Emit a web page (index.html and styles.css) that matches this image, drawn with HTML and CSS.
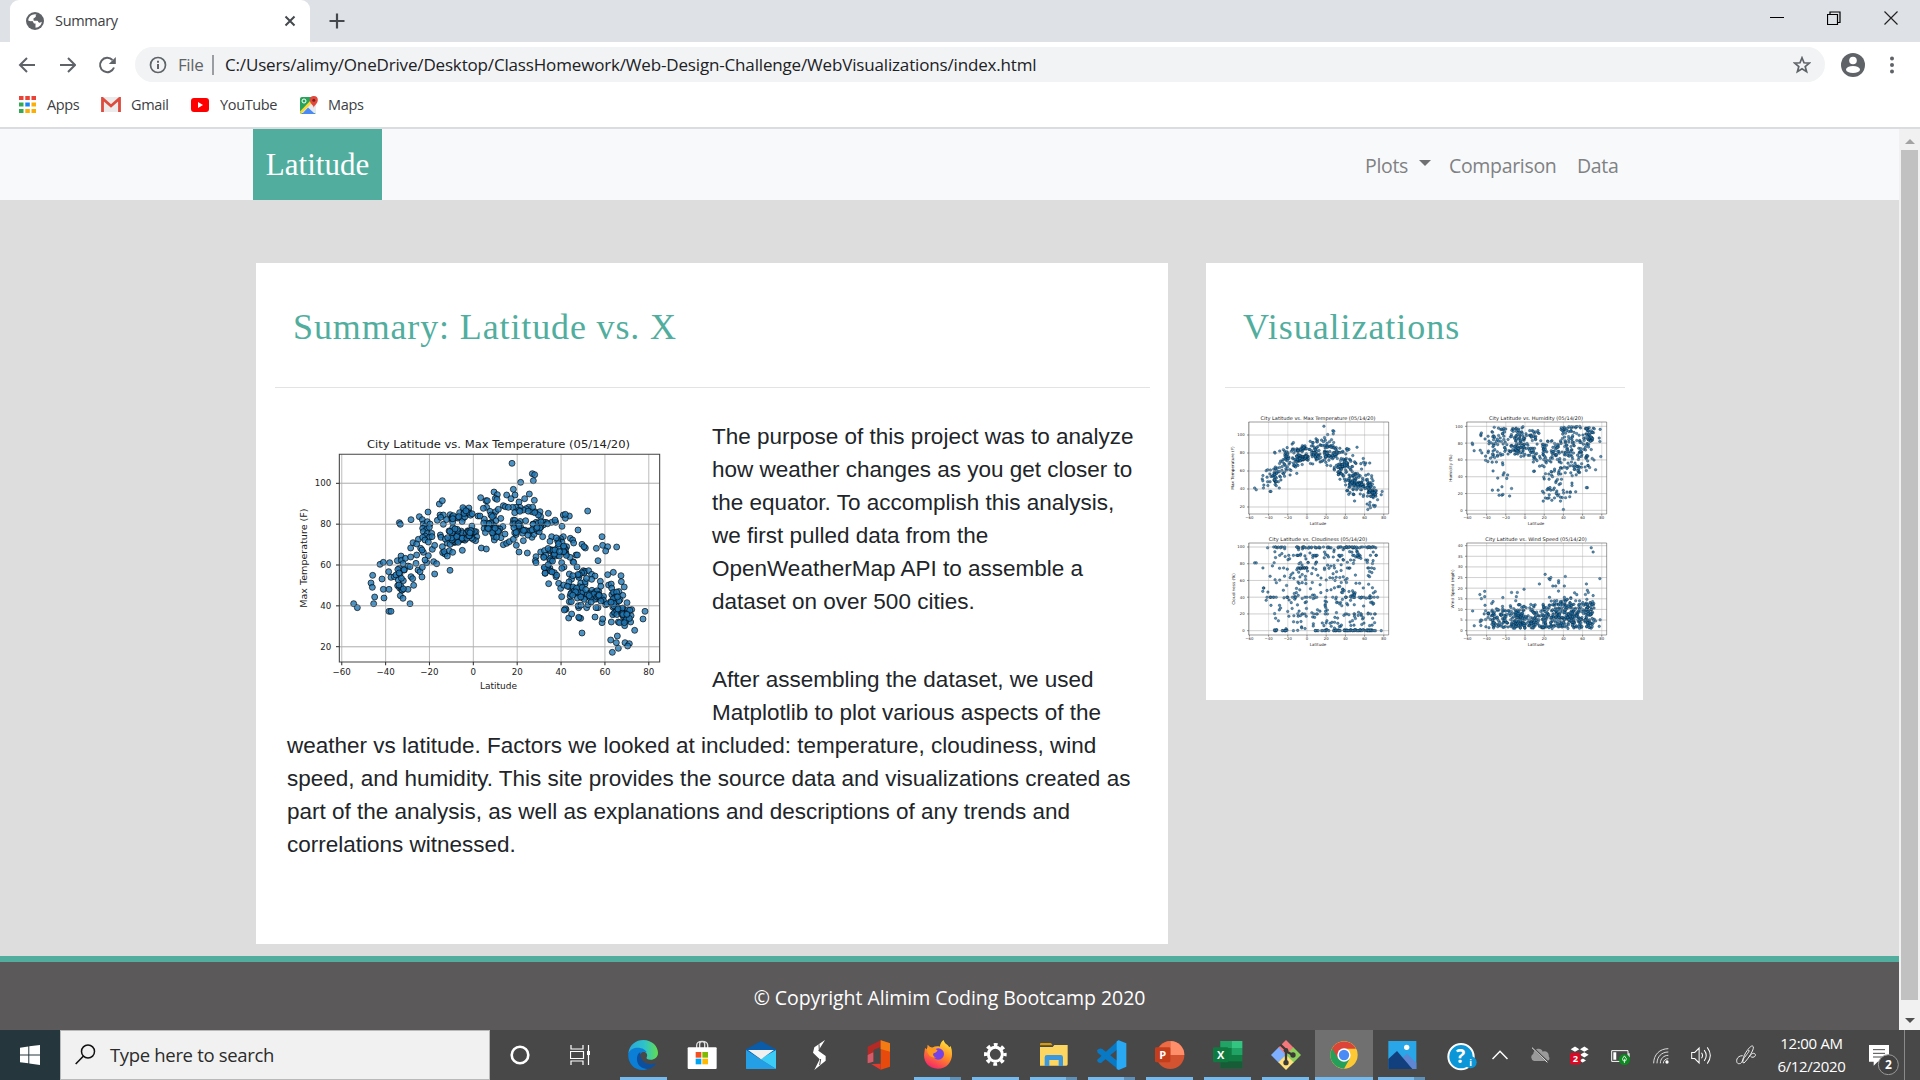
FILE: index.html
```html
<!DOCTYPE html>
<html lang="en">
<head>
<meta charset="utf-8">
<title>Summary</title>
<link rel="stylesheet" href="styles.css">
</head>
<body>
<div class="tabstrip">
  <div class="tab">
    <svg class="favicon" viewBox="0 0 18 18"><circle cx="9" cy="9" r="9" fill="#5f6368"/><path d="M10.500 2.300C6 1.500 2.500 4.500 2.200 8.500c1.500.8 3 .8 4.300.6l1.500 2.400h1.500v4.300c3.500-.2 6.200-3 6.300-6.300-1 .8-2 1-3 .6L11.500 8.500H7.500V6.300h2.300l.7-1.500z" fill="#fff"/><path d="M9.800 2.200v2.600L8 6.300v2.200h3.500l1.500 2.300 2.800-.8C16.500 5 13 2.300 9.800 2.200z" fill="#5f6368"/></svg>
    <span class="tab-title">Summary</span>
    <svg class="tab-close" viewBox="0 0 12 12"><path d="M1.500 1.500l9 9M10.500 1.500l-9 9" stroke="#45494d" stroke-width="2"/></svg>
  </div>
  <svg class="plus" viewBox="0 0 16 16"><path d="M8 .5v15M.5 8h15" stroke="#45494d" stroke-width="2.200"/></svg>
  <div class="win">
    <svg viewBox="0 0 14 14"><path d="M0 6.500h14" stroke="#000"/></svg>
    <svg viewBox="0 0 14 14"><path d="M.5 3.500h10v10H.5zM3 3V1h10v10.500h-2" fill="none" stroke="#000" stroke-width="1.200"/></svg>
    <svg viewBox="0 0 14 14"><path d="M.5.5l13 13M13.500.5l-13 13" stroke="#222" stroke-width="1.200"/></svg>
  </div>
</div>
<div class="toolbar">
  <svg class="nav-ic" viewBox="0 0 18 18"><path d="M17 9H2M9 2L2 9l7 7" fill="none" stroke="#5f6368" stroke-width="2"/></svg>
  <svg class="nav-ic" viewBox="0 0 18 18"><path d="M2 9h15M10 2l7 7-7 7" fill="none" stroke="#5f6368" stroke-width="2"/></svg>
  <svg class="nav-ic" viewBox="0 0 18 18"><path d="M16 11.500A7.200 7.200 0 1 1 14.500 4" fill="none" stroke="#5f6368" stroke-width="2"/><path d="M17.800 1v7h-7z" fill="#5f6368"/></svg>
  <div class="omnibox">
    <svg class="info" viewBox="0 0 18 18"><circle cx="9" cy="9" r="7.500" fill="none" stroke="#5f6368" stroke-width="1.700"/><path d="M9 8v5M9 4.800v2" stroke="#5f6368" stroke-width="2"/></svg>
    <span class="file">File</span><span class="bar"></span>
    <span class="url">C:/Users/alimy/OneDrive/Desktop/ClassHomework/Web-Design-Challenge/WebVisualizations/index.html</span>
    <svg class="star" viewBox="0 0 18 18"><path d="M9 1.800l2 5 5.300.3-4.100 3.400 1.400 5.200L9 12.800l-4.600 2.900 1.400-5.200L1.700 7.100 7 6.800z" fill="none" stroke="#5f6368" stroke-width="1.700"/></svg>
  </div>
  <svg class="avatar" viewBox="0 0 24 24"><circle cx="12" cy="12" r="12" fill="#5f6368"/><circle cx="12" cy="7.500" r="3.800" fill="#fff"/><ellipse cx="12" cy="16.500" rx="7" ry="3.600" fill="#fff"/></svg>
  <svg class="dots" viewBox="0 0 4 18"><g fill="#5f6368"><circle cx="2" cy="2.500" r="2"/><circle cx="2" cy="9" r="2"/><circle cx="2" cy="15.500" r="2"/></g></svg>
</div>
<div class="bookmarks">
  <svg class="b-apps" viewBox="0 0 17 17"><path d="M0 0h4.500v4H0zM6.300 0h4.500v4H6.300zM12.500 0H17v4h-4.500z" fill="#ea4335"/><path d="M0 6.500h4.500v4H0zM0 13h4.500v4H0z" fill="#34a853"/><path d="M6.300 6.500h4.500v4H6.300z" fill="#1a84f5"/><path d="M12.500 6.500H17v4h-4.500zM6.300 13h4.500v4H6.300zM12.500 13H17v4h-4.500z" fill="#fbaf06"/></svg>
  <span class="b1">Apps</span>
  <svg class="b-gmail" viewBox="0 0 20 15"><rect width="20" height="15" rx="1" fill="#eceaea"/><path d="M1.500 15V1.500L10 9l8.500-7.500V15" fill="none" stroke="#dd4b3e" stroke-width="2.800"/></svg>
  <span class="b2">Gmail</span>
  <svg class="b-yt" viewBox="0 0 18 14"><rect width="18" height="14" rx="3" fill="#f00"/><path d="M7 4l5 3-5 3z" fill="#fff"/></svg>
  <span class="b3">YouTube</span>
  <svg class="b-maps" viewBox="0 0 18 18"><rect y="1" width="16" height="17" rx="2" fill="#2aa35a"/><path d="M1 17L14 3l2 4v10z" fill="#e8eaed"/><path d="M2 18l6-6.500 7 6.500z" fill="#4a8af4"/><path d="M0 15.500L11 4l2 2L1 18z" fill="#fdd835"/><circle cx="4" cy="5" r="2" fill="none" stroke="#fff" stroke-width="1"/><path d="M13.800 12c0-3-4-4-4-8a4 4 0 0 1 8 0c0 4-4 5-4 8z" fill="#e2483c"/><circle cx="13.800" cy="4.200" r="1.500" fill="#7b1f18"/></svg>
  <span class="b4">Maps</span>
</div>
<div class="viewport">
  <div class="page">
    <nav class="navbar">
      <a class="brand">Latitude</a>
      <div class="links"><span class="l1">Plots</span><i class="caret"></i><span class="l2">Comparison</span><span class="l3">Data</span></div>
    </nav>
    <main class="content">
      <article class="card main-card">
        <h1 class="h-sum">Summary: Latitude vs. X</h1>
        <hr>
        <div class="prose">
          <svg class="chart" id="big" viewBox="0 0 1170 870"></svg>
          <p>The purpose of this project was to analyze how weather changes as you get closer to the equator. To accomplish this analysis, we first pulled data from the OpenWeatherMap API to assemble a dataset on over 500 cities.</p>
          <p>After assembling the dataset, we used Matplotlib to plot various aspects of the weather vs latitude. Factors we looked at included: temperature, cloudiness, wind speed, and humidity. This site provides the source data and visualizations created as part of the analysis, as well as explanations and descriptions of any trends and correlations witnessed.</p>
        </div>
      </article>
      <aside class="card side-card">
        <h1 class="h-vis">Visualizations</h1>
        <hr>
        <div class="thumbs">
          <svg id="t0" viewBox="0 0 655 363"></svg><svg id="t1" viewBox="0 0 655 363"></svg>
          <svg id="t2" viewBox="0 0 655 363"></svg><svg id="t3" viewBox="0 0 655 363"></svg>
        </div>
      </aside>
    </main>
    <footer>© Copyright Alimim Coding Bootcamp 2020</footer>
  </div>
  <div class="scrollbar"><i class="up"></i><div class="thumb"></div><i class="down"></i></div>
</div>
<div class="taskbar">
  <div class="start"><svg viewBox="0 0 20 20"><path d="M0 2.700L8.300 1.500V9.400H0zM9.300 1.300L20 0v9.400H9.300zM0 10.400h8.300v7.900L0 17.200zM9.300 10.400H20V20L9.300 18.500z" fill="#fff"/></svg></div>
  <div class="search"><svg viewBox="0 0 21 21"><circle cx="13" cy="7.500" r="6.500" fill="none" stroke="#111" stroke-width="1.500"/><path d="M8.500 12L.7 20" stroke="#111" stroke-width="1.600"/></svg><span class="s-text">Type here to search</span></div>
  <div class="cortana"><svg viewBox="0 0 20 20"><circle cx="10" cy="10" r="8.300" fill="none" stroke="#fff" stroke-width="2.600"/></svg></div>
  <div class="tview"><svg viewBox="0 0 21 20"><path d="M1 0v4h12V0M1 20v-4h12v4M.5 6.500h13v7H.5zM18.500 0v20" fill="none" stroke="#fff" stroke-width="1.200"/><path d="M17 6h3v4h-3z" fill="#fff"/></svg></div>
  <div class="app wide run"><svg viewBox="0 0 90 90"><defs><linearGradient id="eg"><stop offset="0" stop-color="#2aa5dd"/><stop offset=".55" stop-color="#2fc3c9"/><stop offset="1" stop-color="#62dd4e"/></linearGradient></defs><path d="M1 40C4 14 24 0 46 0c27 0 44 20 44 38 0 14-11 21-22 21-10 0-14-3-12-7 5-8-2-18-14-18C25 34 10 30 1 40z" fill="url(#eg)"/><path d="M1 40c6-12 16-17 28-17 14 0 25 7 27 14-18-8-27 14-18 27 9 14 25 14 40 8-8 11-20 18-34 18C15 90-2 66 1 40z" fill="#0b7fd6"/><path d="M37 37c-16 6-16 50 22 50 11-1 19-8 25-16-4-3-12 3-22 1-20-3-27-22-25-35z" fill="#0c4f9e"/></svg></div>
  <div class="app wide"><svg viewBox="0 0 90 90"><path d="M29 24V16C29 0 62 0 62 16v8M38 24V12c0-10 15-10 15 0v12" fill="none" stroke="#ddd" stroke-width="4"/><rect x="2" y="22" width="87" height="65" rx="3" fill="#fff"/><path d="M26 36h17v17H26z" fill="#f25022"/><path d="M46 36h17v17H46z" fill="#7fba00"/><path d="M26 56h17v17H26z" fill="#00a4ef"/><path d="M46 56h17v17H46z" fill="#ffb900"/></svg></div>
  <div class="app wide"><svg viewBox="0 0 90 90"><path d="M0 28L45 3l45 25v20H0z" fill="#0a5ba8"/><path d="M0 30l90 57H0z" fill="#1a8fde"/><path d="M90 30v57L42 57z" fill="#3ccbf4"/><path d="M0 30l42 27 48 30H3q-3 0-3-3z" fill="#249ee4"/><path d="M6 30h78L45 58z" fill="#f0f0f0"/></svg></div>
  <div class="app wide"><svg viewBox="0 0 90 90"><path d="M60 0L28 22 24 38 44 58 28 90 62 62V48L40 32z" fill="#fff"/><path d="M42 13l1 20M47 57l-3 18" stroke="#4a4a4a" stroke-width="3"/></svg></div>
  <div class="app wide"><svg viewBox="0 0 90 90"><path d="M11 20L50 1v20L28 30v35l-17 5z" fill="#b52a24"/><path d="M11 45l17-8v28l-17 5z" fill="#d35c6a"/><path d="M50 1l28 9v70l-28 9z" fill="#e64a0c"/><path d="M50 1l28 9v25l-28-8z" fill="#f27c13"/><path d="M22 72l28-1v18z" fill="#e33a2e"/></svg></div>
  <div class="app run multi"><svg viewBox="0 0 90 90"><defs><linearGradient id="fg" x1=".8" y1="0" x2=".3" y2="1"><stop offset="0" stop-color="#ffe63c"/><stop offset=".5" stop-color="#ff8a24"/><stop offset="1" stop-color="#f5246c"/></linearGradient></defs><path d="M4 38l2-14 6 4 2-14c4 5 9 7 13 9 8-4 17-5 23-3 2-9 6-17 12-20 2 12 12 12 17 22l4-4c12 33-2 68-39 68C15 86-1 62 4 38z" fill="url(#fg)"/><circle cx="46" cy="42" r="17" fill="#7542e5"/><path d="M12 24c12-4 24 0 32 8l-7 6c-12 1-6 14 4 14-14 4-30-6-29-28z" fill="#ff9a1f"/></svg></div>
  <div class="app run"><svg viewBox="0 0 90 90"><circle cx="43" cy="43" r="21" fill="none" stroke="#fff" stroke-width="9"/><circle cx="43" cy="43" r="29" fill="none" stroke="#fff" stroke-width="10" stroke-dasharray="11.400 11.400" stroke-dashoffset="5.700"/></svg></div>
  <div class="app run multi"><svg viewBox="0 0 90 90"><path d="M3 12q0-3 3-3h30l5 7H3z" fill="#d99a06"/><path d="M3 21h38l5-6h40v58q0 4-4 4H3z" fill="#fdd662"/><path d="M17 78V52q0-7 7-7h41q7 0 7 7v26H59V60H31v18z" fill="#3b97de"/></svg></div>
  <div class="app run multi"><svg viewBox="0 0 90 90"><path d="M0 31q8-9 16-4l49 39v23L2 38zM65 0v25L12 69q-10 1-12-9z" fill="#0879c4"/><path d="M65 1l23 9v70l-23 10-6-3V4z" fill="#29a9f4"/></svg></div>
  <div class="app run"><svg viewBox="0 0 90 90"><circle cx="46" cy="45" r="42" fill="#d35230"/><path d="M46 3a42 42 0 0 1 42 42H46z" fill="#ff8f6b"/><path d="M46 3v42H6A42 42 0 0 1 46 3z" fill="#ed6c47"/><rect x="0" y="22" width="46" height="45" rx="4" fill="#c43e1c"/><text x="23" y="56" font-size="33">P</text></svg></div>
  <div class="app run"><svg viewBox="0 0 90 90"><path d="M22 3h66v82H22z" fill="#107c41"/><path d="M22 3h34v21H22z" fill="#21a366"/><path d="M56 3h32v21H56z" fill="#33c481"/><path d="M56 24h32v21H56z" fill="#21a366"/><path d="M22 64h66v21H22z" fill="#185c37"/><rect x="0" y="22" width="46" height="45" rx="4" fill="#0f7a40"/><text x="23" y="56" font-size="33">X</text></svg></div>
  <div class="app run"><svg viewBox="0 0 90 90"><path d="M45 0l23 23-23 23-23-23z" fill="#f4777c"/><path d="M67 22l23 23-23 23-23-23z" fill="#8ccf5b"/><path d="M23 22l22 23-22 23L0 45z" fill="#7fb0ff"/><path d="M45 44l23 23-23 23-23-23z" fill="#ffe07a"/><path d="M28 14l17 16v42M45 34l22 12" fill="none" stroke="#3b3a38" stroke-width="7"/><circle cx="45" cy="31" r="7" fill="#3b3a38"/><circle cx="45" cy="68" r="8" fill="#3b3a38"/><circle cx="66" cy="45" r="8" fill="#3b3a38"/></svg></div>
  <div class="app run active"><svg viewBox="0 0 90 90"><circle cx="45" cy="45" r="41" fill="#fcc934"/><path d="M45 45L9.500 24.500A41 41 0 0 0 45 86l18-31z" fill="#25a05a"/><path d="M9.500 24.500A41 41 0 0 1 80.500 26H45L27 55z" fill="#dc4437"/><circle cx="45" cy="45" r="20" fill="#fff"/><circle cx="45" cy="45" r="15.500" fill="#4b8bf5"/></svg></div>
  <div class="app run multi"><svg viewBox="0 0 90 90"><path d="M4 3h84v84H4z" fill="#28a6e8"/><path d="M40 60l20-19 28 27v19H40z" fill="#5f86d2"/><path d="M4 57l26-24 46 54H4z" fill="#12407f"/><circle cx="59" cy="22" r="8" fill="#fff"/></svg></div>
  <div class="tray">
    <svg class="y-help" viewBox="0 0 90 84"><circle cx="42" cy="41" r="38" fill="#0b96d8" stroke="#fff" stroke-width="6"/><text x="41" y="61" font-size="58">?</text><circle cx="71" cy="58" r="18" fill="#0b96d8"/><text x="71" y="68" font-size="27">i</text></svg>
    <svg class="y-chev" viewBox="0 0 16 10"><path d="M.5 9L8 1.300 15.500 9" fill="none" stroke="#fff" stroke-width="1.500"/></svg>
    <svg class="y-cloud" viewBox="0 0 60 48"><path d="M12 42a12 12 0 0 1-2-22C12 4 34 0 38 14c10-4 20 3 18 14 6 8 0 14-5 14z" fill="#9a9a9a"/><path d="M8 2l46 44" stroke="#4a4a4a" stroke-width="6"/><path d="M6 2l46 44" stroke="#eee" stroke-width="3"/></svg>
    <svg class="y-drop" viewBox="0 0 60 56"><path d="M2 9L15 1l13 8-13 8zM30 9l13-8 13 8-13 8zM30 26l13-8 13 8-13 8zM28 43l11-6 9 6-10 6z" fill="#fff"/><rect x="0" y="20" width="32" height="35" rx="5" fill="#d80a24"/><text x="16" y="47" font-size="28">2</text></svg>
    <svg class="y-bat" viewBox="0 0 58 46"><path d="M2 2h50v33H2z" fill="none" stroke="#fff" stroke-width="3"/><path d="M7 7h9v23H7zM53 10h4v12h-4z" fill="#fff"/><circle cx="41" cy="29" r="17" fill="#0c8a1f"/><path d="M41 18q-10 10-4 15h8q6-5-4-15zM41 27v13" fill="none" stroke="#fff" stroke-width="2.500"/></svg>
    <svg class="y-wifi" viewBox="0 0 48 48"><g fill="none" stroke="#ddd" stroke-width="3"><path d="M2 46C2 20 20 2 46 2M12 46c0-20 14-34 34-34M22 46c0-14 10-24 24-24M31 46c0-8 6-14 15-14"/></g><circle cx="42" cy="42" r="5" fill="#fff"/></svg>
    <svg class="y-vol" viewBox="0 0 62 56"><g fill="none" stroke="#fff" stroke-width="3"><path d="M2 19h9L24 6v44L11 37H2zM31 20q6 8 0 16M39 12q12 16 0 32M48 4q18 24 0 48"/></g></svg>
    <svg class="y-pen" viewBox="0 0 60 60"><path d="M20 32C-2 32-2 58 10 56c12 0 8-20 24-40C44 2 50 0 52 6c2 8-14 34-28 48l-4-2 2-10C34 26 46 12 36 18M40 36c8-16 20-12 18-4-2 6-12 6-14 2" fill="none" stroke="#eee" stroke-width="3"/></svg>
    <div class="clock"><span class="c1">12:00 AM</span><span class="c2">6/12/2020</span></div>
    <svg class="y-note" viewBox="0 0 90 90"><path d="M0 0h60v50H26L14 62V50H0z" fill="#fff"/><path d="M12 14h36M12 25h36M12 36h36" stroke="#4a4a4a" stroke-width="3"/><circle cx="58" cy="59" r="30" fill="#414141" stroke="#9a9a9a" stroke-width="3"/><text x="58" y="72" font-size="36">2</text></svg>
    <i class="peek"></i>
  </div>
</div>
<script src="charts.js"></script>
</body>
</html>
```
FILE: charts.js
```js
// Seeded generator keeps the scatter stable between loads.
let seed = 20;
const rnd = () => (seed = (seed * 16807) % 2147483647) / 2147483647;
const gauss = () => (rnd() + rnd() + rnd() + rnd() - 2) * 1.7;

// City latitude / max temperature, in plot canvas units of the large figure.
const measured = `191,551 202,563 243,489 248,466 247,502 254,531 251,551 270,433 280,427 299,428 276,477 280,508 297,508 282,534 296,455
303,472 313,470 297,574 303,574 322,422 333,408 334,421 346,415 362,411 380,405 328,445 343,450 354,438 360,440 318,465 330,462 323,497
329,504 335,510 354,508 340,482 331,527 339,535 360,551 371,496 363,470 368,476 325,480 378,430 384,450 390,455 396,471 397,442 410,428
415,407 405,420 431,425 440,431 434,462 400,397 427,388 434,376 362,384 369,368 385,358 380,372 392,385 396,390 328,308 331,313 363,299
388,290 397,299 414,276 448,252 457,242 450,285 460,285 442,301 452,292 460,313 400,312 406,318 412,305 420,312 398,325 410,328 418,322
400,335 412,340 425,340 405,348 418,352 426,350 398,352 405,360 415,366 451,345 453,352 457,380 458,398 465,402 463,395 472,408 478,392
488,397 480,451 517,391 666,130 727,161 734,164 730,182 692,187 670,208 612,216 622,224 616,235 621,238 650,225 675,225 663,236 718,222
704,236 687,246 733,241 572,233 588,242 592,242 640,257 646,260 574,384 589,387 687,396 712,399 738,410 736,422 738,428 752,396 776,491
765,442 893,273 864,330 816,319 820,285 838,288 826,295 826,283 936,350 938,376 953,380 947,393 980,381 919,385 924,422 876,373 886,384
882,380 841,355 848,360 851,369 970,457 993,467 994,485 1065,574 1059,597 1034,631 982,648 962,660 979,668 985,685 967,697 1005,668
1018,671 1013,678 876,639 836,594 845,582 868,594 872,595 866,592 915,591 936,608 938,597 964,606 985,606 1004,617 1022,606 953,464
931,484 1011,548 924,563 918,563 890,563 866,563 828,568 826,566 823,570 838,545 844,545 815,530 820,350 812,356 797,307 785,307
775,280 768,307 760,306 750,275 752,290 735,275 745,285 725,275 716,262 708,266 700,270 690,262 678,262 668,262 655,262 590,262
580,265 600,274 617,275 625,268 611,287 603,285 564,288 570,288 640,374 650,370 658,365 679,376 670,358 700,362 726,352 732,343
758,350 785,350 780,364 633,353 645,342 613,360 558,335 560,350 557,362 880,452 885,454 861,441 849,425 851,427 840,412 858,405
862,405 830,380 825,395 828,400 805,360 815,428 822,441 838,462 865,468 896,452 905,463 915,468 905,478 885,492 798,470 806,490 812,505`
  .trim().split(/\s+/).map(p => p.split(',').map(Number));

// Dense regions: centre x, centre y, spread x, spread y, count.
const clusters = [[503,358,17,12,32],[500,290,16,9,16],[536,276,10,8,11],[540,340,10,13,18],[492,328,9,7,8],[603,322,17,14,34],
[688,318,13,14,26],[715,272,18,6,6],[742,315,18,8,16],[790,400,16,22,28],[782,450,14,8,14],[815,395,10,12,6],
[850,500,24,18,14],[888,520,26,9,34],[870,468,16,10,6],[915,525,12,7,10],[968,510,16,11,10],[980,535,12,9,9],[985,573,13,8,20],
[1010,590,11,11,18],[952,550,14,9,7],[882,545,16,8,7],[335,448,12,12,4],[333,500,8,10,5]];
for (const [cx, cy, sx, sy, n] of clusters)
  for (let i = 0; i < n; i++) measured.push([cx + gauss() * sx, cy + gauss() * sy]);

const temp = measured.map(([x, y]) => [(x - 550) / 6.579, 100 - (y - 190) / 6.125]);
const lats = temp.map(p => p[0]);

const humidity = lats.filter((l, i) => i % 6 !== 1).map(l => {
  const r = rnd();
  let h;
  if (l < -38) h = 55 + rnd() * 42;
  else if (l < -12) h = r < .25 ? 38 + rnd() * 30 : 64 + rnd() * 36;
  else if (l < 8) h = 64 + rnd() * 36;
  else if (l < 18) h = r < .2 ? 40 + rnd() * 25 : 62 + rnd() * 33;
  else if (l < 36) h = r < .45 ? 12 + rnd() * 40 : 56 + rnd() * 28;
  else if (l < 53) h = r < .18 ? 15 + rnd() * 30 : 48 + rnd() * 52;
  else if (l < 64) h = r < .6 ? 42 + rnd() * 28 : 65 + rnd() * 35;
  else h = r < .25 ? 45 + rnd() * 35 : 82 + rnd() * 18;
  return [l, h];
}).concat([[-34,24],[-28,24],[-27,18],[-24,18],[-23,19],[-16,17],[-14,26],[-24,28],[-19,38],[40,1],[65,27],[64,27],[78,82],[79,64],[-55,80],[-53,71],[19,11],[28,12],[37,11]]);

const levels = [0, 0, 0, 1, 1, 20, 40, 75, 90, 99, 100, 100];
const clouds = lats.filter((l, i) => i % 6 !== 2).map(l => {
  const r = rnd();
  if (l < -43) return [l, [75, 90, 81, 47, 51][Math.floor(rnd() * 5)]];
  if (l < -35) return [l, r < .5 ? 40 : 30 + rnd() * 70];
  if (r < .5) return [l, rnd() * 100];
  const v = levels[Math.floor(rnd() * levels.length)];
  if (v < 2 && l > -13 && l < 8) return [l, rnd() < .5 ? 75 : rnd() * 100];
  return [l, v];
});

const wind = lats.map(l => {
  const peak = l > 20 && l < 72 ? 8 : 6;
  return [l, Math.min(19, 1 + Math.abs(peak - 1.5 + gauss() * (l > 15 ? 4.3 : 3.6)))];
}).concat([[69,39],[71,37],[21,26.5],[27,25],[25,24.500],[42,25.500],[35,23.500],[35,22.500],[26,24],[15,22],[29,21],[32,21],[41,21],[64,22],[78,24.500],[-1,19.500],[-42,18.500],[-47,17],[-42,16],[-14,18],[-8,18],[-9,16],[65,19],[66,18],[63,17],[71,16.500]]);

function figure(id, o) {
  const X = v => o.x0 + v * o.sx, Y = v => o.y0 - v * o.sy;
  let s = '<g stroke="#b0b0b0" stroke-opacity=".8" stroke-width="' + o.grid + '">';
  const xt = [-60, -40, -20, 0, 20, 40, 60, 80];
  for (const v of xt) s += `<path d="M${X(v)} ${o.top}V${o.bottom}"/>`;
  for (const v of o.yt) s += `<path d="M${o.left} ${Y(v)}H${o.right}"/>`;
  s += '</g>';
  const dot = p => `<circle cx="${X(p[0]).toFixed(1)}" cy="${Y(p[1]).toFixed(1)}" r="${o.r}"/>`;
  s += `<g fill="#1f77b4" stroke="#000" stroke-width="${o.edge}" fill-opacity=".8" stroke-opacity=".75">` + o.data.map(dot).join('') + '</g>';
  s += '<g stroke="#b0b0b0" stroke-opacity=".5" stroke-width="' + o.grid + '">';
  for (const v of o.yt) s += `<path d="M${o.left} ${Y(v)}H${o.right}"/>`;
  s += '</g>';
  s += `<path d="M${o.left} ${o.top}H${o.right}V${o.bottom}H${o.left}z" fill="none" stroke="#444" stroke-width="${o.grid}"/>`;
  s += `<g fill="#222" font-family="DejaVu Sans, sans-serif" font-size="${o.fs}">`;
  for (const v of xt) s += `<path d="M${X(v)} ${o.bottom}v${o.tick}" stroke="#333" stroke-width="${o.grid}"/><text text-anchor="middle" x="${X(v)}" y="${o.bottom + o.xl}">${String(v).replace('-', '−')}</text>`;
  for (const v of o.yt) s += `<path d="M${o.left} ${Y(v)}h${-o.tick}" stroke="#333" stroke-width="${o.grid}"/><text text-anchor="end" x="${o.left - o.tick * 2.400}" y="${Y(v) + o.fs * .36}">${v}</text>`;
  const mid = (o.left + o.right) / 2, my = (o.top + o.bottom) / 2;
  s += `<text text-anchor="middle" x="${mid - o.lx}" y="${o.bottom + o.ll}" font-size="${o.fs * 1.04}">Latitude</text>`;
  s += `<text text-anchor="middle" transform="translate(${o.yx} ${my}) rotate(-90)" font-size="${o.fs * 1.05}" textLength="${o.yw}" lengthAdjust="spacingAndGlyphs">${o.ylabel}</text>`;
  s += `<text text-anchor="middle" x="${mid - o.lx}" y="${o.top - o.ty}" font-size="${o.fs * 1.3}" textLength="${o.tw}" lengthAdjust="spacingAndGlyphs">${o.title}</text></g>`;
  document.getElementById(id).innerHTML = s;
}
const t5 = [20, 40, 60, 80, 100], t6 = [0, 20, 40, 60, 80, 100];
figure('big', {data: temp, x0: 550, sx: 6.579, y0: 802.5, sy: 6.125, left: 148, right: 1109, top: 103, bottom: 726, yt: t5, r: 9, edge: 2.6, grid: 3.2, fs: 26, tick: 10, xl: 40, ll: 81, lx: 3, yx: 50, yw: 298, ylabel: 'Max Temperature (F)', ty: 18, tw: 789, title: 'City Latitude vs. Max Temperature (05/14/20)'});
const small = {x0: 270, sx: 2.879, left: 95, right: 515, top: 27, bottom: 303, r: 3.9, edge: 1.1, grid: 1.6, fs: 11.500, tick: 5, xl: 16, ll: 34, lx: 2, ty: 7};
figure('t0', {...small, data: temp, y0: 336, sy: 2.7, yt: t5, yx: 52, yw: 130, ylabel: 'Max Temperature (F)', tw: 345, title: 'City Latitude vs. Max Temperature (05/14/20)'});
figure('t1', {...small, data: humidity, y0: 292, sy: 2.520, yt: t6, yx: 50, yw: 82, ylabel: 'Humidity (%)', tw: 282, title: 'City Latitude vs. Humidity (05/14/20)'});
figure('t2', {...small, data: clouds, y0: 290, sy: 2.510, yt: t6, yx: 53, yw: 95, ylabel: 'Cloudiness (%)', tw: 295, title: 'City Latitude vs. Cloudiness (05/14/20)'});
figure('t3', {...small, data: wind, y0: 290, sy: 6.375, yt: [0, 5, 10, 15, 20, 25, 30, 35, 40], yx: 57, yw: 117, ylabel: 'Wind Speed (mph)', tw: 304, title: 'City Latitude vs. Wind Speed (05/14/20)'});
```
FILE: styles.css
```css
* { box-sizing: border-box; }
body { margin: 0; width: 1920px; height: 1080px; overflow: hidden; display: flex; flex-direction: column; background: #fff; font-family: "Open Sans", "Noto Sans", sans-serif; color: #3c4043; }
svg { display: block; flex: none; }
span { white-space: nowrap; }

.tabstrip { height: 42px; background: #dee1e6; display: flex; align-items: center; }
.tab { margin-left: 10px; width: 300px; height: 42px; background: #fff; border-radius: 9px 9px 0 0; display: flex; align-items: center; padding: 0 14px 0 16px; }
.favicon { width: 18px; height: 18px; }
.tab-title { margin-left: 11px; font-size: 14.500px; letter-spacing: -.3px; flex: 1; padding-bottom: 1px; }
.tab-close { width: 12px; height: 12px; }
.plus { width: 16px; height: 16px; margin-left: 19px; }
.win { margin-left: auto; display: flex; gap: 43px; padding: 0 22px 6px 0; }
.win svg { width: 14px; height: 14px; }

.toolbar { height: 45px; display: flex; align-items: center; padding-left: 18px; }
.nav-ic { width: 18px; height: 18px; margin-right: 22px; }
.omnibox { margin-left: -3px; width: 1690px; height: 35px; border-radius: 18px; background: #f1f3f4; display: flex; align-items: center; padding: 0 14px; }
.info { width: 18px; height: 18px; }
.file { margin-left: 11px; width: 34px; font-size: 17px; letter-spacing: -.4px; color: #5f6368; }
.bar { width: 2px; height: 20px; background: #9a9ea2; }
.url { margin-left: 11px; font-size: 17px; letter-spacing: -.163px; color: #202124; flex: 1; }
.star { width: 18px; height: 18px; }
.avatar { width: 24px; height: 24px; margin-left: 16px; }
.dots { width: 4px; height: 18px; margin-left: 25px; }

.bookmarks { height: 42px; border-bottom: 2px solid #dadce0; display: flex; align-items: center; padding: 0 0 5px 19px; font-size: 14.500px; letter-spacing: -.35px; }
.b-apps { width: 17px; height: 17px; margin-right: 11px; }
.b-gmail { width: 20px; height: 15px; margin-right: 10px; }
.b-yt { width: 18px; height: 14px; margin-right: 11px; }
.b-maps { width: 18px; height: 18px; margin-right: 10px; }
.b1 { width: 54px; }
.b2 { width: 60px; }
.b3 { width: 80px; }

.viewport { height: 901px; display: flex; }
.page { width: 1899px; background: #ddd; display: flex; flex-direction: column; }
.navbar { height: 71px; background: #f8f9fb; display: flex; padding-left: 253px; }
.brand { width: 129px; height: 71px; background: #51ae9e; color: #fff; font: 31px "Liberation Serif", serif; display: flex; align-items: center; justify-content: center; }
.links { margin-left: auto; width: 534px; display: flex; align-items: center; padding-top: 2px; font-size: 19.500px; letter-spacing: -.33px; color: #808183; }
.l1 { width: 55px; }
.caret { border: 6px solid transparent; border-top-color: #6f7072; border-bottom: 0; margin: -6px 18px 0 -1px; }
.l2 { width: 128px; }

.content { height: 756px; padding: 63px 0 0 256px; display: flex; align-items: flex-start; gap: 38px; }
.card { background: #fff; }
.main-card { width: 912px; height: 681px; padding: 0 18px 0 19px; }
.side-card { width: 437px; height: 437px; padding: 0 18px 0 19px; }
.card h1 { margin: 0; height: 124px; padding: 40px 0 0 18px; font: 36px/48px "Liberation Serif", serif; color: #51ae9e; }
.h-sum { letter-spacing: .87px; }
.card .h-vis { letter-spacing: .95px; }
.card hr { margin: 0; border: 0; height: 1px; background: #e3e3e3; }
.prose { padding: 32px 13px 0 12px; font: 22.500px/33px "Liberation Sans", Arial, sans-serif; color: #212529; }
.prose p { margin: 0 0 45px; }
.chart { float: left; width: 390px; height: 290px; margin: 0 32px 0 3px; }
.thumbs { display: grid; grid-template-columns: 218.330px 218.330px; margin: 25px 0 0 -8.300px; width: 437px; }
.thumbs svg { width: 218.330px; height: 121px; }
footer { height: 74px; border-top: 6px solid #51ae9e; background: #5c595a; color: #fff; font-size: 19.500px; letter-spacing: -.06px; display: flex; align-items: center; justify-content: center; padding-top: 2px; }

.scrollbar { width: 21px; background: #f1f1f1; display: flex; flex-direction: column; align-items: center; padding: 10px 0 7px; }
.up { border: 5px solid transparent; border-bottom-color: #a3a3a3; border-top: 0; }
.thumb { width: 17px; height: 850px; margin-top: 6px; background: #c1c1c1; }
.down { border: 5px solid transparent; border-top-color: #505050; border-bottom: 0; margin-top: auto; }

.taskbar { height: 50px; background: #484848; display: flex; color: #fff; }
.taskbar text { fill: #fff; font-family: "Open Sans", sans-serif; font-weight: 700; text-anchor: middle; }
.start { width: 60px; background: #26363d; padding: 15px 20px; }
.start svg { width: 20px; height: 20px; }
.search { width: 429.500px; background: #f1f1f1; border: 1px solid #b9b9b9; color: #2b2b2b; display: flex; align-items: center; padding: 0 0 2px 14px; font-size: 18.500px; letter-spacing: -.33px; }
.search svg { width: 21px; height: 21px; margin-right: 14px; }
.cortana { width: 61px; padding: 15px 20px; }
.cortana svg { width: 20px; height: 20px; }
.tview { width: 63px; padding: 15px 19px; }
.tview svg { width: 21px; height: 20px; }
.app { width: 58px; height: 50px; display: flex; flex-direction: column; align-items: center; padding-top: 10px; flex: none; }
.wide { width: 59px; }
.app svg { width: 30px; height: 30px; }
.run::after { content: ""; width: 47px; height: 3px; margin-top: 7px; background: #76b9ed; }
.multi::after { background: linear-gradient(90deg, #76b9ed 36px, #5f90b8 36px); }
.active { background: #707070; }
.active::after { width: 58px; }
.tray { flex: 1; position: relative; display: flex; align-items: center; padding-left: 16px; }
.y-help { width: 30px; height: 28px; margin: 4px 15px 0 0; }
.y-chev { width: 16px; height: 10px; margin-right: 22px; }
.y-cloud { width: 20px; height: 16px; margin-right: 20px; }
.y-drop { width: 20px; height: 19px; margin-right: 21px; }
.y-bat { width: 19px; height: 15px; margin: 4px 23px 0 0; }
.y-wifi { width: 16px; height: 16px; margin: 2px 22px 0 0; }
.y-vol { width: 21px; height: 19px; margin-right: 24px; }
.y-pen { width: 20px; height: 20px; margin-right: 21px; }
.clock { width: 70px; display: flex; flex-direction: column; align-items: center; font-size: 15px; line-height: 23px; letter-spacing: -.33px; margin-right: 22px; }
.y-note { width: 30px; height: 30px; margin-top: 10px; }
.peek { width: 1px; height: 50px; background: #8a8a8a; margin-left: 5px; }
```
